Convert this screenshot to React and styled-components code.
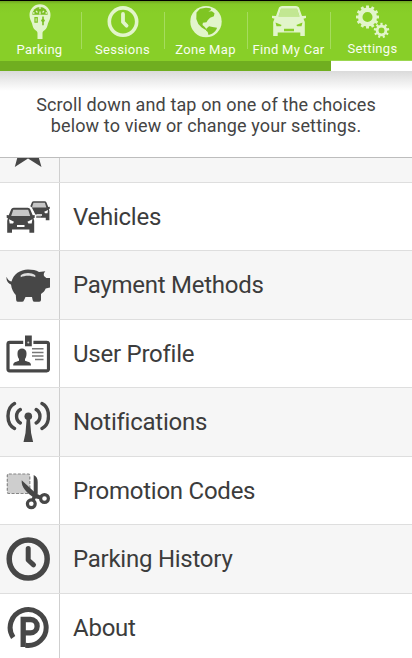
import React from "react";
import styled, { createGlobalStyle } from "styled-components";

const GlobalStyle = createGlobalStyle`
  * {
    box-sizing: border-box;
  }

  body {
    margin: 0;
    font-family: Roboto, sans-serif;
    background: #fff;
  }
`;

const Screen = styled.div`
  width: 412px;
  height: 658px;
  display: flex;
  flex-direction: column;
  overflow: hidden;
`;

const TabBar = styled.nav`
  display: grid;
  grid-template-columns: 82px 83px 83px 83px 81px;
  height: 71px;
  flex: none;
  border-top: 1px solid #000;
  background: linear-gradient(#6fa522, #84c926 3px, #88cf28 12px);
`;

const Tab = styled.div`
  display: flex;
  flex-direction: column;
  align-items: center;
  padding-top: ${(props) => (props.$active ? "2px" : "3px")};
  padding-right: ${(props) => (props.$active ? "0" : "2px")};
  color: #e2f5cb;
  border-bottom: 10px solid ${(props) => (props.$active ? "#fff" : "#70ae20")};
  background: linear-gradient(#a6dc5e, #a6dc5e) right 11px / 1px 37px no-repeat;
  ${(props) => props.$active && "background: none; padding-left: 2px; box-shadow: inset 0 -1px #9bd750;"}

  &:first-child {
    padding-right: 3px;
  }

  svg {
    flex: none;
  }
`;

const TabLabel = styled.span`
  margin-top: 2px;
  font-size: 13px;
  line-height: 16px;
  letter-spacing: 0.3px;
  white-space: nowrap;
  color: #f8fdf0;
`;

const Intro = styled.p`
  margin: 0;
  flex: none;
  height: 87px;
  padding-top: 23px;
  text-align: center;
  font-size: 18px;
  line-height: 21px;
  letter-spacing: 0.13px;
  color: #444;
  border-bottom: 1px solid #bdbdbd;
  background: linear-gradient(#dadada, #fff 20px);
`;

const List = styled.div`
  flex: 1;
  min-height: 0;
  display: flex;
  flex-direction: column;
  justify-content: flex-end;
  overflow: hidden;
`;

const Row = styled.div`
  display: flex;
  flex: none;
  height: 68.5px;
  border-bottom: 1px solid #dedede;
  background: ${(props) => (props.$shaded ? "#f6f6f6" : "#fff")};

  &:last-child {
    height: 64.2px;
    border-bottom: none;
  }
`;

const IconCell = styled.div`
  width: 60px;
  padding: 12px 0 0 6px;
  border-right: 1px solid #cfcfcf;
  color: #474747;
  overflow: hidden;
`;

const RowLabel = styled.span`
  padding-left: 13px;
  font-size: 24px;
  line-height: 68px;
  letter-spacing: -0.25px;
  color: #3c3c3c;
`;

// tab icons, 40x36
const TabIcon = ({ children }) => (
  <svg width="40" height="36" viewBox="0 0 40 36" fill="currentColor">
    {children}
  </svg>
);

const MeterIcon = () => (
  <TabIcon>
    <path d="M20 .3a10.500 10.500 0 0 0-10.500 10.700c0 4 1.500 5.500 2.500 8.500.9 3 1.200 5.400 3.500 6.800 1.700 1 2 1.700 2 3.200V35h5v-5.500c0-1.500.3-2.200 2-3.200 2.300-1.400 2.600-3.800 3.500-6.800 1-3 2.500-4.500 2.500-8.500A10.500 10.500 0 0 0 20 .3z" />
    <path d="M12.300 10.800a7.700 7.900 0 0 1 15.400 0z" fill="#7cbf25" />
    <path d="M20 10.500v-3M20 5V3M17.500 8.500L16 7M22.500 8.500L24 7M14.500 9h-1.500M25.500 9H27" stroke="currentColor" strokeWidth="1.300" />
    <path d="M15 13.600h2.200v4.600H15z" fill="none" stroke="#80c426" strokeWidth="1.300" />
    <path d="M22.200 12.500h1.600v2.300l1.200 1.700-1.200 1.800v3h-1.600v-3L21 16.500l1.200-1.700z" fill="#7cbf25" />
  </TabIcon>
);

const ClockTabIcon = () => (
  <TabIcon>
    <g fill="none" stroke="currentColor" strokeLinecap="round" strokeLinejoin="round">
      <circle cx="20" cy="17.600" r="13.700" strokeWidth="3.600" />
      <path d="M20 10v8l3.600 3.700" strokeWidth="3.800" />
    </g>
  </TabIcon>
);

const GlobeIcon = () => (
  <TabIcon>
    <circle cx="20" cy="17.600" r="15.700" />
    <path
      d="M10.500 8.500l3.500-3.800 6-1 4.500.6.500 1.600-2.600 1.600 3.500-.2 2.600 2-.6 3-3.800 1.400-2.400 2.600-1.200 2-3.600.4-.4 2.400 2 1.600 2 2.600-.8.8-4-2.600-3.400-3.600-2-5z"
      fill="#7fc523"
    />
    <path d="M20.500 24.500l2.600-2.200 3.400.7 4.500.8c-.5 3-4.500 6.500-8.500 7.200l-.8-3-1.800-1.500z" fill="#7fc523" />
  </TabIcon>
);

const CarTabIcon = () => (
  <TabIcon>
    <path
      fillRule="evenodd"
      d="M10 3.500q1-1.500 3-1.500h14q2 0 3 1.500l3 8.500 4-.2v2.200l-2.500.7 1.300 3.300V32h-4.500v-3.500H8.700V32H4.200V18l1.300-3.300L3 14v-2.200l4 .2zM12 4.800L9.500 12.500h21L28 4.800zM6.500 18.500l1 3.800h4.200l1-1.300zM33.500 18.500l-6.200 2.500 1 1.300h4.200zM15 24.700v2.600h10v-2.600z"
    />
    <path d="M12 4.800h16l2.500 7.700h-21z" opacity=".65" />
  </TabIcon>
);

const Cog = ({ cx, cy, r, teeth, size }) => (
  <g transform={`translate(${cx} ${cy})`}>
    {Array.from({ length: teeth }, (_, i) => (
      <rect
        key={i}
        x={-size / 2}
        y={-r - 2}
        width={size}
        height={size * 2}
        transform={`rotate(${(360 / teeth) * i})`}
      />
    ))}
    <circle r={r * 0.77} fill="none" stroke="currentColor" strokeWidth={r * 0.48} />
  </g>
);

const CogsIcon = () => (
  <TabIcon>
    <Cog cx={14.500} cy={14} r={9.500} teeth={12} size={2.900} />
    <Cog cx={28.500} cy={27.500} r={5.700} teeth={9} size={2.200} />
  </TabIcon>
);

// list icons, 44x44
const RowIcon = ({ children }) => (
  <svg width="44" height="44" viewBox="0 0 44 44" fill="currentColor">
    {children}
  </svg>
);

const StarIcon = () => (
  <RowIcon>
    <path d="M22 2l5 14h15L31 25.500 35.500 41 22 32.500 8.800 41 13 25.500 2 16h15z" />
  </RowIcon>
);

const CarFront = () => (
  <g>
    <path d="M4.500 1.500Q5 0 7 0h14q2 0 2.500 1.500L26 7.500l2-.2V10l-1.200.6.700 2.400v12h-4.800v-3.200H5.300V25H.5V13l.7-2.400L0 10V7.300l2 .2z" />
    <path d="M6.500 2h15l2 6.200h-19z" fill="#c7c7c7" />
    <path d="M2.300 11.500l5 2.500-1 1.800H3zM25.700 11.500l-5 2.500 1 1.800H25zM10.300 17.300h7.500v2h-7.500z" fill="#fff" />
  </g>
);

const VehiclesIcon = () => (
  <RowIcon>
    <g transform="translate(22.500 6.200) scale(.76)">
      <CarFront />
    </g>
    <g transform="translate(.7 12.700)">
      <path d="M5-1.500h18.500l1.500 1 3.500 7 1.500 1v11h-2" fill="#fff" />
      <CarFront />
    </g>
    <path d="M30 22h5" stroke="#888" strokeWidth="1.600" />
  </RowIcon>
);

const PiggyIcon = () => (
  <RowIcon>
    <path d="M.6 13.800c.8 2.700 2.500 4.300 4.900 4.700C7.500 11.500 14 6.600 22 6.600c4.500 0 8 .8 11 2.400l6.300-.8c-1.500 1.500-1.800 3-1.300 4.700l2.300 2.100h3.700v9.500l-4.300 1c-1 2.500-2.500 4-4.700 5.500v6.200q-.5 1.500-2 1.500h-4.500q-1.500 0-1.800-1.500L26 34h-6.500L18 37.200q-.5 1.500-2 1.500h-4q-1.500 0-1.800-1.500L9.800 32C7.500 29.500 5.500 26 5 21.500 2 20.500 0 17.500.6 13.800z" />
    <path d="M14.700 12.200c4-2.900 10.600-2.900 14.600 0v2c-4-2-10.600-2-14.600 0z" fill="#dedede" />
  </RowIcon>
);

const BadgeIcon = () => (
  <RowIcon>
    <rect x="2" y="10.300" width="40.500" height="28.500" rx="1.800" fill="none" stroke="currentColor" strokeWidth="3.200" />
    <path d="M17.200 8h10.200v4.500H17.200z" fill="#fff" />
    <path d="M19 3.500h6.800v10.800H19z" />
    <circle cx="22.300" cy="10.500" r="1" fill="#ccc" />
    <path d="M7.200 33.500c0-3 1.500-3.500 5.800-4.800v-1.700c-1.500-2-1.500-4-1.500-6 0-6 9-6 9 0 0 2 0 4-1.500 6v1.700c4.500 1.300 6 1.800 6 4.800z" />
    <path d="M26 16.800h11.500M26 20.500h11.500M26 24h11.500M29 27.500h8.500" stroke="#777" strokeWidth="1.600" />
  </RowIcon>
);

const AntennaIcon = () => (
  <RowIcon>
    <circle cx="22.300" cy="16.300" r="3.800" />
    <path d="M20.700 18h3.200l1.200 15 2 9H17.500l2-9z" />
    <g fill="none" stroke="currentColor" strokeWidth="3.400" strokeLinecap="round">
      <path d="M8.500 3.500C-.2 8-.2 24 8.500 28.500M36 3.500c8.700 4.500 8.700 20.500 0 25M14.300 9.500c-5 3-5 10.500 0 13.500M30.200 9.500c5 3 5 10.500 0 13.500" />
    </g>
  </RowIcon>
);

const CouponIcon = () => (
  <RowIcon>
    <rect x="1.300" y="5" width="22.500" height="19.500" rx="1.500" fill="#cecece" stroke="#858585" strokeWidth="1.200" strokeDasharray="3 1.500" />
    <path d="M15.700 11.200L30 24.500l6.500 3-1.500 3-6-1.200C20.500 24 15 18 15.700 11.200z" />
    <path d="M27.700 6c3 1.500 4 3.500 4 7v11.500l-3.400 8-3-1.500 2.400-7z" />
    <g fill="none" stroke="currentColor" strokeWidth="3.200">
      <circle cx="25.300" cy="34.800" r="3.900" />
      <circle cx="38.500" cy="29.500" r="3.900" />
    </g>
  </RowIcon>
);

const HistoryIcon = () => (
  <RowIcon>
    <g fill="none" stroke="currentColor" strokeLinecap="round" strokeLinejoin="round">
      <circle cx="22.200" cy="22" r="19" strokeWidth="5.500" />
      <path d="M22.200 11.500V23l5.300 4.800" strokeWidth="5" />
    </g>
  </RowIcon>
);

const AboutIcon = () => (
  <RowIcon>
    <g fill="none" stroke="currentColor" strokeWidth="5">
      <path d="M7.200 31.500A18 18 0 1 1 19.500 39.300" />
      <path d="M17.200 41V13.500h7.300a6.600 6.600 0 0 1 0 13.300H17.500" strokeWidth="5.300" />
    </g>
  </RowIcon>
);

const tabs = [
  { label: "Parking", icon: MeterIcon },
  { label: "Sessions", icon: ClockTabIcon },
  { label: "Zone Map", icon: GlobeIcon },
  { label: "Find My Car", icon: CarTabIcon },
  { label: "Settings", icon: CogsIcon, active: true },
];

const rows = [
  { label: "", icon: StarIcon },
  { label: "Vehicles", icon: VehiclesIcon },
  { label: "Payment Methods", icon: PiggyIcon },
  { label: "User Profile", icon: BadgeIcon },
  { label: "Notifications", icon: AntennaIcon },
  { label: "Promotion Codes", icon: CouponIcon },
  { label: "Parking History", icon: HistoryIcon },
  { label: "About", icon: AboutIcon },
];

const App = () => {
  return (
    <Screen>
      <GlobalStyle />
      <TabBar>
        {tabs.map(({ label, icon: Icon, active }) => (
          <Tab key={label} $active={active}>
            <Icon />
            <TabLabel>{label}</TabLabel>
          </Tab>
        ))}
      </TabBar>

      <Intro>
        Scroll down and tap on one of the choices
        <br />
        below to view or change your settings.
      </Intro>

      <List>
        {rows.map(({ label, icon: Icon }, i) => (
          <Row key={i} $shaded={i % 2 === 0}>
            <IconCell>
              <Icon />
            </IconCell>
            <RowLabel>{label}</RowLabel>
          </Row>
        ))}
      </List>
    </Screen>
  );
};

export default App;
